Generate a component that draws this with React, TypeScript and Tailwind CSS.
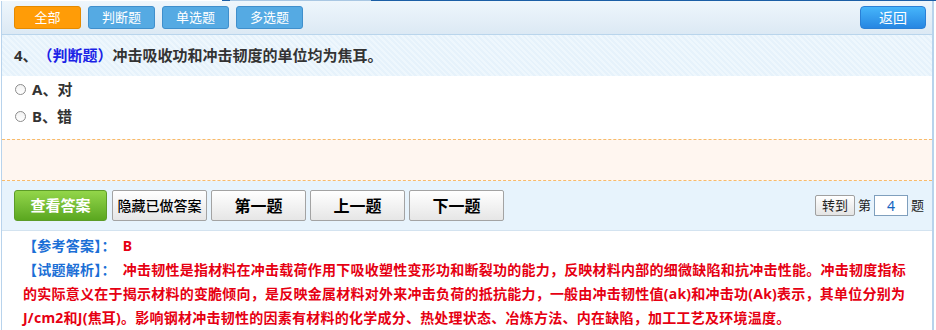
import React from "react";

const FONT = {
  fontFamily: '"Noto Sans", "Noto Sans CJK SC", sans-serif',
};

function TopButton({ label, active }: { label: string; active?: boolean }) {
  return (
    <div
      className={
        "flex h-[23px] w-[67px] items-center justify-center rounded-[3px] border text-[13px] text-white " +
        (active
          ? "border-[#e58a00] bg-[#ff9c07]"
          : "border-[#3f8fcc] bg-[#55aae3]")
      }
    >
      {label}
    </div>
  );
}

function GreyButton({ label, small }: { label: string; small?: boolean }) {
  return (
    <div
      className={
        "flex h-[31px] w-[95px] items-center justify-center rounded-[2px] border border-[#a3a3a3] bg-gradient-to-b from-[#ffffff] to-[#e6e6e6] text-black " +
        (small ? "text-[14px] font-medium" : "text-[16px] font-bold")
      }
    >
      {label}
    </div>
  );
}

function Radio() {
  return (
    <span className="inline-block h-[11px] w-[11px] rounded-full border border-[#8c8c8c] bg-gradient-to-b from-[#f2f2f2] to-[#ffffff]" />
  );
}

export default function App() {
  return (
    <div className="h-[330px] w-[936px] overflow-hidden bg-white" style={FONT}>
      {/* top line */}
      <div className="flex h-[1px]">
        <div className="w-[222px] bg-white" />
        <div className="w-[8px] bg-[#1b5ea6]" />
        <div className="w-[141px] bg-[#a9c7e3]" />
        <div className="flex-1 bg-[#1b5ea6]" />
      </div>
      <div className="ml-[1px] w-[933px] border-l border-r-2 border-[#b8d3ec]">
        {/* toolbar */}
        <div className="flex h-[34px] items-start justify-between border-b border-[#b9d5ec] bg-gradient-to-b from-[#eef6fc] to-[#dce9f4] pl-[12px] pr-[6px] pt-[5px]">
          <div className="flex gap-[7px]">
            <TopButton label="全部" active />
            <TopButton label="判断题" />
            <TopButton label="单选题" />
            <TopButton label="多选题" />
          </div>
          <div className="flex h-[23px] w-[66px] items-center justify-center rounded-[4px] border border-[#2a80d6] bg-gradient-to-b from-[#46b5fa] to-[#2786e2] text-[14px] text-white">
            返回
          </div>
        </div>
        {/* question header */}
        <div className="flex h-[41px] items-center bg-[repeating-linear-gradient(45deg,#e6f2fb_0px,#e6f2fb_2px,#eef7fd_2px,#eef7fd_4px)] pl-[12px] text-[15px] font-bold text-[#333333]">
          <span>4、</span>
          <span className="text-[#1a22e6]">（判断题）</span>
          <span>冲击吸收功和冲击韧度的单位均为焦耳。</span>
        </div>
        {/* options */}
        <div className="flex h-[27px] items-center gap-[6px] pl-[13px] text-[15px] font-bold text-[#333333]">
          <Radio />
          <span>A、对</span>
        </div>
        <div className="flex h-[27px] items-center gap-[6px] pl-[13px] text-[15px] font-bold text-[#333333]">
          <Radio />
          <span>B、错</span>
        </div>
        <div className="h-[9px]" />
        <div className="h-[42px] border-y border-dashed border-[#f7bb6b] bg-[#fff6f0]" />
        {/* action bar */}
        <div className="flex h-[50px] items-center justify-between border-b border-[#d3e3f0] bg-[#e7f3fc] pl-[12px] pr-[8px]">
          <div className="flex gap-[4px]">
            <div className="mr-[1px] flex h-[31px] w-[93px] items-center justify-center rounded-[3px] border border-[#5d9c28] bg-gradient-to-b from-[#93d64a] to-[#5aa71f] text-[15px] font-bold text-white">
              查看答案
            </div>
            <GreyButton label="隐藏已做答案" small />
            <GreyButton label="第一题" />
            <GreyButton label="上一题" />
            <GreyButton label="下一题" />
          </div>
          <div className="flex items-center text-[13px] text-[#222222]">
            <div className="flex h-[21px] w-[40px] items-center justify-center rounded-[2px] border border-[#a0a0a0] bg-gradient-to-b from-[#ffffff] to-[#e4e4e4]">
              转到
            </div>
            <span className="ml-[3px]">第</span>
            <div className="ml-[3px] flex h-[21px] w-[34px] items-center justify-center border border-[#7f9fbd] bg-white text-[14px] text-[#1565c0]">
              4
            </div>
            <span className="ml-[3px]">题</span>
          </div>
        </div>
        {/* answer */}
        <div className="pl-[21px] pt-[3px] text-[14px] font-bold leading-[24px] tracking-[0.24px] whitespace-nowrap">
          <div>
            <span className="text-[#1b6fd6]">【参考答案】：</span>
            <span className="ml-[7px] text-[#e60012]">B</span>
          </div>
          <div className="text-[#e60012]">
            <span className="text-[#1b6fd6]">【试题解析】：</span>
            <span className="ml-[7px]">冲击韧性是指材料在冲击载荷作用下吸收塑性变形功和断裂功的能力，反映材料内部的细微缺陷和抗冲击性能。冲击韧度指标</span>
          </div>
          <div className="text-[#e60012]">的实际意义在于揭示材料的变脆倾向，是反映金属材料对外来冲击负荷的抵抗能力，一般由冲击韧性值(ak)和冲击功(Ak)表示，其单位分别为</div>
          <div className="text-[#e60012]">J/cm2和J(焦耳)。影响钢材冲击韧性的因素有材料的化学成分、热处理状态、冶炼方法、内在缺陷，加工工艺及环境温度。</div>
        </div>
      </div>
    </div>
  );
}
